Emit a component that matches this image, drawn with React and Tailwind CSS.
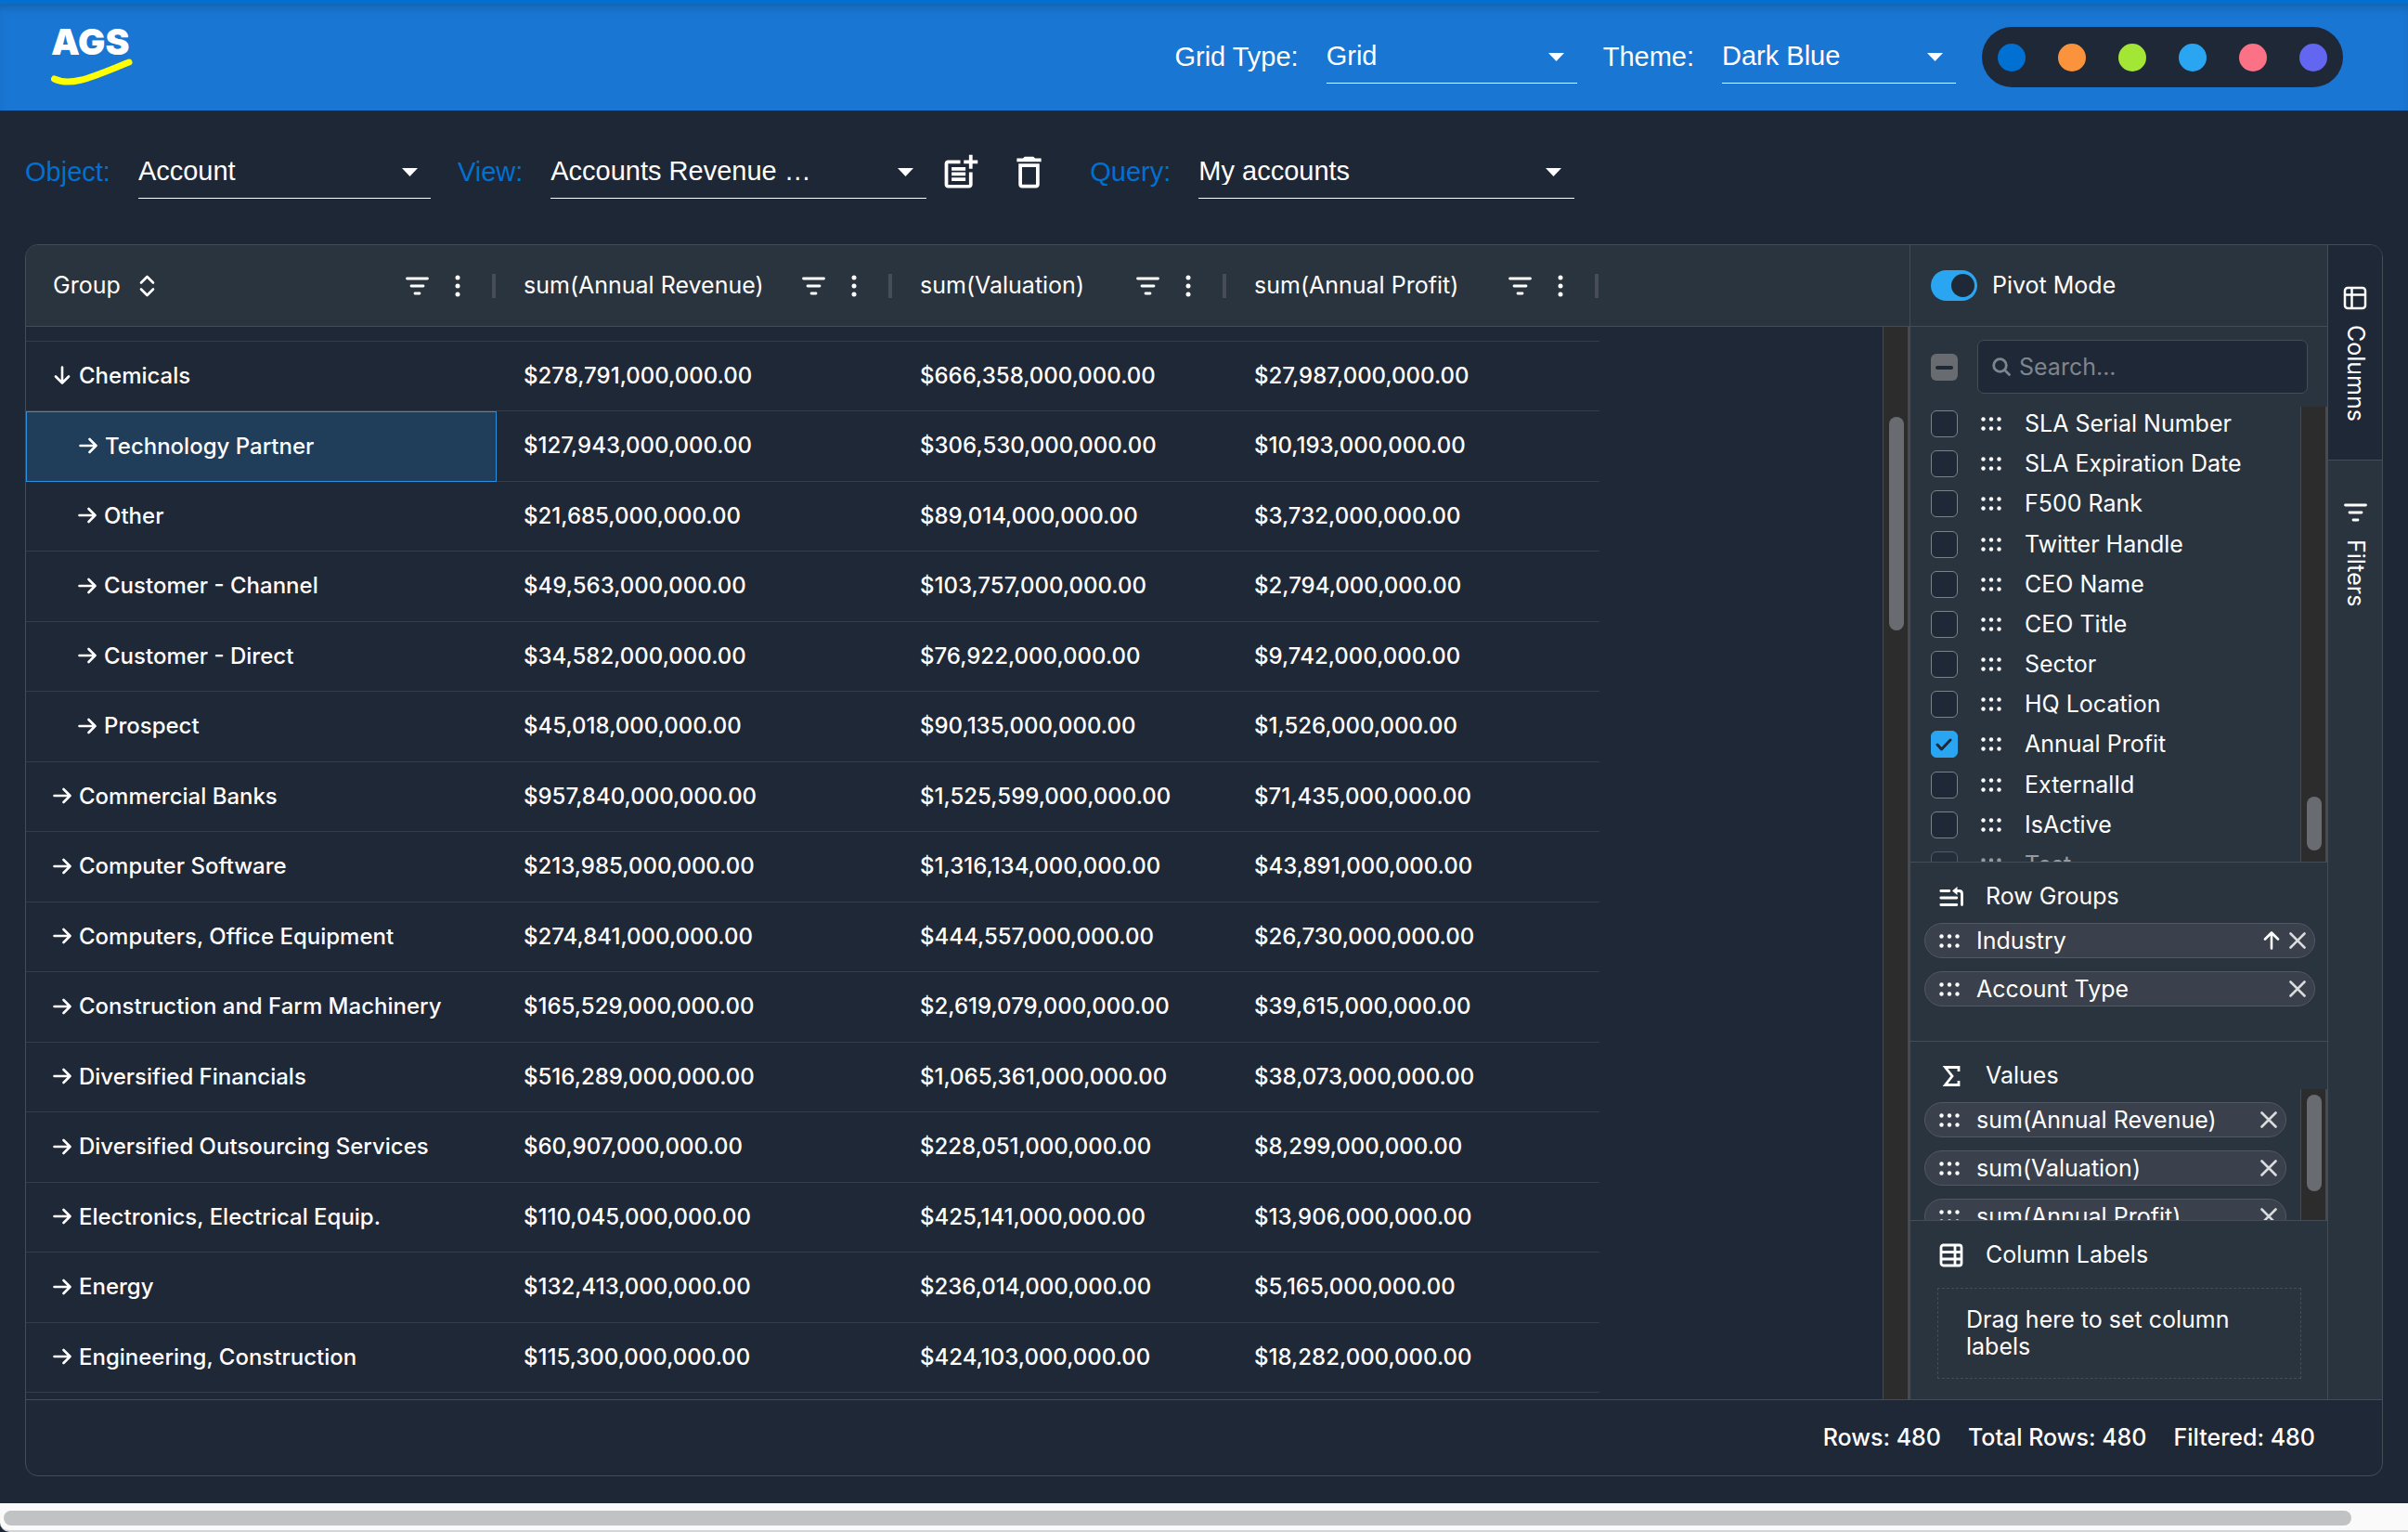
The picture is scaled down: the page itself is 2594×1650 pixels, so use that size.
import React, { useState } from 'react';
import { MdPostAdd, MdDeleteOutline } from 'react-icons/md';

const swatches = [
  { name: 'Blue', color: 'bg-[#0070d2]' },
  { name: 'Orange', color: 'bg-[#fb923c]' },
  { name: 'Lime', color: 'bg-[#a3e635]' },
  { name: 'Sky', color: 'bg-[#2aa5f2]' },
  { name: 'Rose', color: 'bg-[#fb7185]' },
  { name: 'Indigo', color: 'bg-[#6366f1]' },
];

const rows = [
  { name: 'Chemicals', open: true, revenue: '$278,791,000,000.00', valuation: '$666,358,000,000.00', profit: '$27,987,000,000.00' },
  { name: 'Technology Partner', child: true, selected: true, revenue: '$127,943,000,000.00', valuation: '$306,530,000,000.00', profit: '$10,193,000,000.00' },
  { name: 'Other', child: true, revenue: '$21,685,000,000.00', valuation: '$89,014,000,000.00', profit: '$3,732,000,000.00' },
  { name: 'Customer - Channel', child: true, revenue: '$49,563,000,000.00', valuation: '$103,757,000,000.00', profit: '$2,794,000,000.00' },
  { name: 'Customer - Direct', child: true, revenue: '$34,582,000,000.00', valuation: '$76,922,000,000.00', profit: '$9,742,000,000.00' },
  { name: 'Prospect', child: true, revenue: '$45,018,000,000.00', valuation: '$90,135,000,000.00', profit: '$1,526,000,000.00' },
  { name: 'Commercial Banks', revenue: '$957,840,000,000.00', valuation: '$1,525,599,000,000.00', profit: '$71,435,000,000.00' },
  { name: 'Computer Software', revenue: '$213,985,000,000.00', valuation: '$1,316,134,000,000.00', profit: '$43,891,000,000.00' },
  { name: 'Computers, Office Equipment', revenue: '$274,841,000,000.00', valuation: '$444,557,000,000.00', profit: '$26,730,000,000.00' },
  { name: 'Construction and Farm Machinery', revenue: '$165,529,000,000.00', valuation: '$2,619,079,000,000.00', profit: '$39,615,000,000.00' },
  { name: 'Diversified Financials', revenue: '$516,289,000,000.00', valuation: '$1,065,361,000,000.00', profit: '$38,073,000,000.00' },
  { name: 'Diversified Outsourcing Services', revenue: '$60,907,000,000.00', valuation: '$228,051,000,000.00', profit: '$8,299,000,000.00' },
  { name: 'Electronics, Electrical Equip.', revenue: '$110,045,000,000.00', valuation: '$425,141,000,000.00', profit: '$13,906,000,000.00' },
  { name: 'Energy', revenue: '$132,413,000,000.00', valuation: '$236,014,000,000.00', profit: '$5,165,000,000.00' },
  { name: 'Engineering, Construction', revenue: '$115,300,000,000.00', valuation: '$424,103,000,000.00', profit: '$18,282,000,000.00' },
];

const initialFields = [
  { label: 'SLA Serial Number' },
  { label: 'SLA Expiration Date' },
  { label: 'F500 Rank' },
  { label: 'Twitter Handle' },
  { label: 'CEO Name' },
  { label: 'CEO Title' },
  { label: 'Sector' },
  { label: 'HQ Location' },
  { label: 'Annual Profit', checked: true },
  { label: 'ExternalId' },
  { label: 'IsActive' },
  { label: 'Test', disabled: true },
];

const Caret = () => (
  <svg className="pointer-events-none absolute right-[14px] top-[24px] h-[9px] w-[17px]" viewBox="0 0 17 9" fill="currentColor">
    <path d="M0 0h17L8.500 9z" />
  </svg>
);

const SelectField = ({ id, label, value, labelClass, widthClass }) => (
  <div className="flex items-center gap-[30px]">
    <label htmlFor={id} className={labelClass}>{label}</label>
    <div className={`relative ${widthClass}`}>
      <select id={id} className="h-[57px] w-full appearance-none border-b border-white bg-transparent pb-[2px] text-white outline-none">
        <option>{value}</option>
      </select>
      <Caret />
    </div>
  </div>
);

const FilterIcon = () => (
  <svg className="h-[20px] w-[25px]" viewBox="0 0 25 20" fill="none" stroke="currentColor" strokeWidth="2.8" strokeLinecap="round">
    <path d="M1.500 2h22M6 10h13M10 18h5" />
  </svg>
);

const MenuIcon = () => (
  <svg className="h-[24px] w-[6px]" viewBox="0 0 6 24" fill="currentColor">
    <circle cx="3" cy="3" r="2.5" />
    <circle cx="3" cy="12" r="2.5" />
    <circle cx="3" cy="21" r="2.5" />
  </svg>
);

const SortIcon = () => (
  <svg className="h-[24px] w-[17px]" viewBox="0 0 17 24" fill="none" stroke="currentColor" strokeWidth="2.6" strokeLinecap="round" strokeLinejoin="round">
    <path d="M2 8.500l6.500-6.500L15 8.500M2 15.500l6.500 6.500 6.500-6.500" />
  </svg>
);

const ArrowIcon = ({ className }) => (
  <svg className={`h-[20px] w-[20px] shrink-0 ${className}`} viewBox="0 0 20 20" fill="none" stroke="currentColor" strokeWidth="2.6" strokeLinecap="round" strokeLinejoin="round">
    <path d="M1.500 10h17M11.500 3l7 7-7 7" />
  </svg>
);

const GripIcon = () => (
  <svg className="h-[15px] w-[22px] shrink-0" viewBox="0 0 22 15" fill="currentColor">
    <circle cx="2.500" cy="2.500" r="2.2" />
    <circle cx="11" cy="2.500" r="2.2" />
    <circle cx="19.500" cy="2.500" r="2.2" />
    <circle cx="2.500" cy="12.500" r="2.2" />
    <circle cx="11" cy="12.500" r="2.2" />
    <circle cx="19.500" cy="12.500" r="2.2" />
  </svg>
);

const CloseIcon = () => (
  <svg className="h-[18px] w-[18px]" viewBox="0 0 18 18" fill="none" stroke="currentColor" strokeWidth="2.6" strokeLinecap="round">
    <path d="M1.500 1.500l15 15M16.500 1.500l-15 15" />
  </svg>
);

const SearchIcon = () => (
  <svg className="pointer-events-none absolute left-[16px] top-[19px] h-[20px] w-[20px] text-[#7f858c]" viewBox="0 0 20 20" fill="none" stroke="currentColor" strokeWidth="2.8" strokeLinecap="round">
    <circle cx="8.500" cy="8.500" r="6.800" />
    <path d="M13.500 13.500l5 5" />
  </svg>
);

const RowGroupIcon = () => (
  <svg className="h-[22px] w-[26px]" viewBox="0 0 26 22" fill="none" stroke="currentColor" strokeWidth="2.800" strokeLinecap="round">
    <path d="M1.800 4.500h9M1.800 12h17M1.800 19.500h17M24.500 19.500V7.500q0-3-3-3H17" />
    <path d="M14 4.500l5.500-4.500v9z" fill="currentColor" stroke="none" />
  </svg>
);

const SumIcon = () => (
  <svg className="h-[24px] w-[26px]" viewBox="0 0 26 24" fill="none" stroke="currentColor" strokeWidth="2.800">
    <path d="M21 7V2.500H6.500L14 12l-7.500 9.500H21V17" />
  </svg>
);

const ColumnLabelIcon = () => (
  <svg className="h-[26px] w-[26px]" viewBox="0 0 26 26" fill="none" stroke="currentColor" strokeWidth="2.800">
    <rect x="2" y="2" width="22" height="22" rx="2.500" />
    <path d="M2 9.500h22M2 17h22M17 2v22" />
  </svg>
);

const ColumnsIcon = () => (
  <svg className="h-[26px] w-[26px]" viewBox="0 0 26 26" fill="none" stroke="currentColor" strokeWidth="2.500">
    <rect x="2" y="2" width="22" height="22" rx="3" />
    <path d="M2 9.500h22M9.500 2v22" />
  </svg>
);

const HeaderCell = ({ title, sortable }) => (
  <th className="border-b border-[#444c56] p-0 font-normal">
    <div className="flex items-center">
      <div className="flex flex-1 items-center gap-[20px] pl-[29px]">
        <span>{title}</span>
        {sortable && <SortIcon />}
      </div>
      <button type="button" aria-label={`Filter ${title}`} className="mr-[28px]"><FilterIcon /></button>
      <button type="button" aria-label={`Menu ${title}`} className="mr-[34px]"><MenuIcon /></button>
      <span className="mr-px h-[26px] w-[4px] bg-[#464d58]"></span>
    </div>
  </th>
);

const Pill = ({ label, sorted }) => (
  <li className="flex h-[38px] shrink-0 items-center rounded-full border border-[#515863] bg-[#3a404c] pl-[15px] pr-[9px]">
    <GripIcon />
    <span className="ml-[18px] flex-1 whitespace-nowrap">{label}</span>
    {sorted && <ArrowIcon className="-rotate-90" />}
    <button type="button" aria-label={`Remove ${label}`} className="ml-[9px] text-[#d9dbdd]"><CloseIcon /></button>
  </li>
);

const Section = ({ title, icon, children }) => (
  <section className="flex h-[193px] flex-col overflow-hidden border-t border-[#444c56]">
    <h2 className="flex h-[65px] shrink-0 items-center gap-[24px] pl-[31px] pt-[8px]">
      {icon}
      {title}
    </h2>
    {children}
  </section>
);

const FieldRow = ({ field, onToggle }) => (
  <li className={`flex flex-1 items-center pl-[22px] ${field.disabled ? 'opacity-50' : ''}`}>
    <label className="flex items-center">
      <span className="relative flex">
        <input
          type="checkbox"
          checked={!!field.checked}
          disabled={field.disabled}
          onChange={onToggle}
          className="h-[29px] w-[29px] appearance-none rounded-[6px] border border-[#7b828a] bg-[#1f2836] checked:border-[#2aa5f2] checked:bg-[#2aa5f2]"
        />
        {field.checked && (
          <svg className="pointer-events-none absolute left-[5px] top-[8px] h-[14px] w-[18px]" viewBox="0 0 18 14" fill="none" stroke="#1f2836" strokeWidth="3" strokeLinecap="round" strokeLinejoin="round">
            <path d="M2 7l4.500 5L16 2" />
          </svg>
        )}
      </span>
      <span className="mx-[25px]"><GripIcon /></span>
      {field.label}
    </label>
  </li>
);

const App = () => {
  const [fields, setFields] = useState(initialFields);
  const [pivot, setPivot] = useState(true);
  const [search, setSearch] = useState('');

  const toggleField = (index) => {
    setFields(fields.map((f, i) => (i === index ? { ...f, checked: !f.checked } : f)));
  };

  return (
    <div className="flex min-h-screen flex-col bg-[#1e2735] font-['Inter',sans-serif] text-[25px] leading-[29px] text-white">
      <header className="flex h-[119px] items-center border-t-4 border-[#0070d2] bg-[#1976d2] pl-[55px] pr-[70px] font-['Liberation_Sans',Arial,sans-serif] text-[29px] shadow-[inset_0_8px_8px_-4px_rgba(20,80,140,0.5)]">
        <a href="#" aria-label="AGS home" className="flex flex-col pb-[3px] text-white">
          <span className="font-['Inter',sans-serif] text-[39px] font-black leading-[34px]">AGS</span>
          <svg className="h-[30px] w-[88px]" viewBox="0 0 88 30" fill="none" stroke="#ffff00" strokeWidth="7" strokeLinecap="round">
            <path d="M3.500 23C22 32 46 20 84 5" />
          </svg>
        </a>
        <div className="flex flex-1 items-center justify-end gap-[28px]">
          <SelectField id="gridType" label="Grid Type:" value="Grid" widthClass="w-[270px]" />
          <SelectField id="theme" label="Theme:" value="Dark Blue" widthClass="w-[252px]" />
          <div className="flex h-[65px] items-center gap-[35px] rounded-full bg-[#1f2836] px-[17px]">
            {swatches.map((s) => (
              <button key={s.name} type="button" aria-label={s.name} className={`h-[30px] w-[30px] rounded-full ${s.color}`}></button>
            ))}
          </div>
        </div>
      </header>

      <div className="flex items-center px-[27px] pb-[49px] pt-[38px] font-['Liberation_Sans',Arial,sans-serif] text-[29px]">
        <SelectField id="object" label="Object:" value="Account" labelClass="text-[#0070d2]" widthClass="w-[315px]" />
        <span className="w-[29px]"></span>
        <SelectField id="view" label="View:" value="Accounts Revenue …" labelClass="text-[#0070d2]" widthClass="w-[405px]" />
        <button type="button" aria-label="Add view" className="ml-[14px]"><MdPostAdd size={45} /></button>
        <button type="button" aria-label="Delete view" className="ml-[29px] mr-[43px]"><MdDeleteOutline size={45} /></button>
        <SelectField id="query" label="Query:" value="My accounts" labelClass="text-[#0070d2]" widthClass="w-[405px]" />
      </div>

      <main className="mx-[27px] overflow-hidden rounded-[14px] border border-[#444c56] bg-[#1f2836]">
        <div className="flex">
          <div className="relative min-w-0 flex-1 pb-[7px]">
            <table className="w-full table-fixed border-separate border-spacing-0 text-left">
              <colgroup>
                <col className="w-[507px]" />
                <col className="w-[427px]" />
                <col className="w-[360px]" />
                <col className="w-[401px]" />
                <col />
              </colgroup>
              <thead className="bg-[#2a343f]">
                <tr className="h-[88px]">
                  <HeaderCell title="Group" sortable />
                  <HeaderCell title="sum(Annual Revenue)" />
                  <HeaderCell title="sum(Valuation)" />
                  <HeaderCell title="sum(Annual Profit)" />
                  <td className="border-b border-[#444c56]"></td>
                </tr>
              </thead>
              <tbody>
                <tr className="h-[16px]">
                  <td colSpan={4} className="border-b border-[#343d49] p-0"></td>
                </tr>
              </tbody>
              <tbody className="text-[24px] font-medium">
                {rows.map((row) => (
                  <tr key={row.name} className="odd:h-[75px] even:h-[76px]">
                    <td className={`pb-[2px] pr-0 pt-0 ${row.child ? 'pl-[56px]' : 'pl-[29px]'} ${row.selected ? 'border border-[#2a8fdc] bg-[#203d5a]' : 'border-b border-[#343d49]'}`}>
                      <div className="flex items-center gap-[8px]">
                        <ArrowIcon className={row.open ? 'rotate-90' : ''} />
                        {row.name}
                      </div>
                    </td>
                    <td className="border-b border-[#343d49] pb-[2px] pl-[29px] pt-0">{row.revenue}</td>
                    <td className="border-b border-[#343d49] pb-[2px] pl-[29px] pt-0">{row.valuation}</td>
                    <td className="border-b border-[#343d49] pb-[2px] pl-[29px] pt-0">{row.profit}</td>
                  </tr>
                ))}
              </tbody>
            </table>
            {/* vertical scrollbar */}
            <div className="absolute bottom-0 right-0 top-[88px] w-[29px] border-l border-r-2 border-[#464b52] bg-[#2c2c2c] pl-[6px] pt-[97px]">
              <div className="h-[230px] w-[16px] rounded-full bg-[#686b6f]"></div>
            </div>
          </div>

          <aside className="w-[451px] shrink-0 border-x border-[#444c56] bg-[#2a343f]">
            <label className="flex h-[88px] items-center gap-[16px] border-b border-[#444c56] pl-[22px]">
              <span className="relative flex">
                <input type="checkbox" role="switch" checked={pivot} onChange={() => setPivot(!pivot)} className="peer h-[33px] w-[50px] appearance-none rounded-full bg-[#686b6f] checked:bg-[#2aa5f2]" />
                <span className="pointer-events-none absolute left-[4px] top-[4px] h-[25px] w-[25px] rounded-full bg-[#1f2836] peer-checked:left-[22px]"></span>
              </span>
              Pivot Mode
            </label>

            <div className="flex items-center gap-[21px] pb-[11px] pl-[22px] pr-[21px] pt-[14px]">
              <span className="relative flex">
                <input type="checkbox" aria-label="Toggle all columns" className="h-[29px] w-[29px] appearance-none rounded-[6px] bg-[#686c70]" />
                <span className="pointer-events-none absolute left-[5px] top-[13px] h-[4px] w-[19px] rounded-full bg-[#1f2836]"></span>
              </span>
              <div className="relative flex-1">
                <input
                  type="text"
                  aria-label="Search columns"
                  placeholder="Search..."
                  value={search}
                  onChange={(e) => setSearch(e.target.value)}
                  className="h-[58px] w-full rounded-[7px] border border-[#444c56] bg-[#1f2836] pl-[44px] outline-none placeholder:text-[#7f858c]"
                />
                <SearchIcon />
              </div>
            </div>

            <div className="flex h-[493px] overflow-hidden">
              <ul className="flex h-[518px] flex-1 flex-col">
                {fields.map((field, index) => (
                  <FieldRow key={field.label} field={field} onToggle={() => toggleField(index)} />
                ))}
              </ul>
              <div className="mt-[3px] w-[29px] border-l border-r-2 border-[#464b52] bg-[#2c2c2c] pl-[6px] pt-[420px]">
                <div className="h-[58px] w-[16px] rounded-full bg-[#686b6f]"></div>
              </div>
            </div>

            <Section title="Row Groups" icon={<RowGroupIcon />}>
              <ul className="flex flex-col gap-[14px] pl-[15px] pr-[13px]">
                <Pill label="Industry" sorted />
                <Pill label="Account Type" />
              </ul>
            </Section>
            <Section title="Values" icon={<SumIcon />}>
              <div className="flex min-h-0 flex-1">
                <ul className="flex flex-1 flex-col gap-[14px] pl-[15px] pr-[15px]">
                  <Pill label="sum(Annual Revenue)" />
                  <Pill label="sum(Valuation)" />
                  <Pill label="sum(Annual Profit)" />
                </ul>
                <div className="-mt-[14px] w-[29px] border-l border-r-2 border-[#464b52] bg-[#2c2c2c] pl-[6px] pt-[6px]">
                  <div className="h-[104px] w-[16px] rounded-full bg-[#686b6f]"></div>
                </div>
              </div>
            </Section>
            <Section title="Column Labels" icon={<ColumnLabelIcon />}>
              <div className="ml-[29px] mr-[28px] mt-[7px] flex h-[98px] items-center border border-dashed border-[#444c56] px-[30px]">
                Drag here to set column labels
              </div>
            </Section>
          </aside>

          <nav className="flex w-[58px] shrink-0 flex-col bg-[#2a343f]">
            <button type="button" className="flex h-[232px] flex-col items-center gap-[16px] border-b border-[#444c56] bg-[#1f2836] pt-[44px]">
              <ColumnsIcon />
              <span className="[writing-mode:vertical-rl]">Columns</span>
            </button>
            <button type="button" className="flex flex-col items-center gap-[19px] pt-[46px]">
              <FilterIcon />
              <span className="[writing-mode:vertical-rl]">Filters</span>
            </button>
          </nav>
        </div>

        <footer className="flex h-[82px] items-center justify-end gap-[29px] border-t border-[#444c56] pr-[72px] font-medium">
          <span>Rows: 480</span>
          <span>Total Rows: 480</span>
          <span>Filtered: 480</span>
        </footer>
      </main>

      {/* page scrollbar */}
      <div className="mt-auto h-[31px] rounded-bl-[10px] border-b-2 border-[#d4d5d6] bg-[#fafafa] pl-[4px] pr-[61px] pt-[8px]">
        <div className="h-[16px] rounded-full bg-[#c1c2c3]"></div>
      </div>
    </div>
  );
};

export default App;
